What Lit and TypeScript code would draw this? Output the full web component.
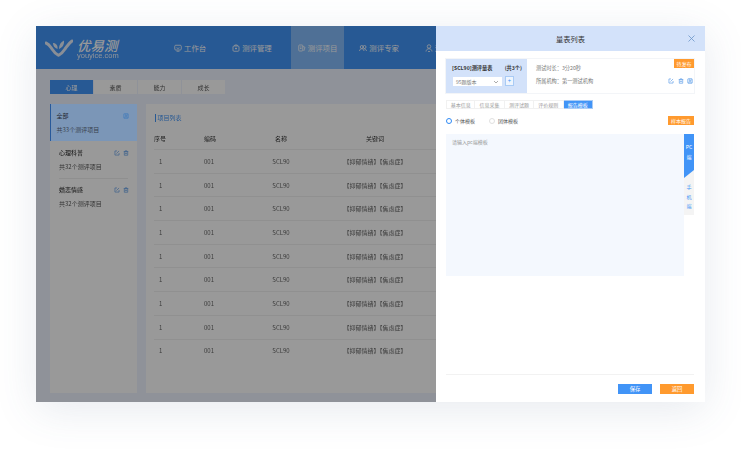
import { LitElement, css, html, svg } from "lit";
import { customElement, state } from "lit/decorators.js";
import { classMap } from "lit/directives/class-map.js";

const icon = (body: unknown, size = 8) => html`<svg
  width=${size}
  height=${size}
  viewBox="0 0 16 16"
  fill="none"
  stroke="currentColor"
  stroke-width="1.6"
>${body}</svg>`;

const icons = {
  desk: svg`<rect x="1.500" y="2.500" width="13" height="9.500" rx="2"/><path d="M5 7.500c1.500 1.600 4.500 1.600 6 0M5 14.500h6"/>`,
  manage: svg`<rect x="2" y="4" width="12" height="10.500" rx="2"/><path d="M5.500 4V2h5v2M8 7v4M6 9h4"/>`,
  project: svg`<rect x="1.500" y="2" width="8" height="12" rx="1.500"/><path d="M9.500 5l4.500 1.500-2.500 7.500M4 6h3M4 9h3"/>`,
  expert: svg`<circle cx="5.500" cy="6" r="3"/><circle cx="11" cy="6" r="3"/><path d="M1 14c.5-3 2-4.500 4.500-4.500S9.500 11 10 14M10 9.500c2.500 0 4.500 1.500 5 4.500"/>`,
  person: svg`<circle cx="8" cy="5" r="3.500"/><path d="M2 15c.5-3.500 2.500-5.500 6-5.500s5.500 2 6 5.500M6 15h4"/>`,
  edit: svg`<path d="M8 2.500H2.500v11h11V8M6.500 9.500l7-7"/>`,
  trash: svg`<path d="M2 4h12M6 4V2h4v2M3.500 4v10h9V4M6.500 7v4M9.500 7v4"/>`,
  publish: svg`<rect x="2" y="2" width="12" height="12" rx="1.500"/><path d="M6 2v5h5V2M5 14v-4h6v4"/>`,
};

const navItems = [
  { label: "工作台", icon: icons.desk },
  { label: "测评管理", icon: icons.manage },
  { label: "测评项目", icon: icons.project, active: true },
  { label: "测评专家", icon: icons.expert },
  { label: "测评用户", icon: icons.person },
];

const categories = ["心理", "素质", "能力", "成长"];

const sideItems = [
  { name: "全部", count: "共33个测评项目", active: true },
  { name: "心理科普", count: "共32个测评项目" },
  { name: "婚恋情感", count: "共32个测评项目" },
];

const drawerTabs = ["基本信息", "信息采集", "测评试题", "评价规则", "报告模板"];

@customElement("app-root")
export class AppRoot extends LitElement {
  static styles = css`
    :host {
      display: block;
      width: 741px;
      height: 449px;
      background: #fff;
      overflow: hidden;
      font-family: "Noto Sans CJK SC", "Noto Sans", sans-serif;
      font-size: 6px;
      color: #555;
    }
    .stage {
      padding: 26px 36px 47px;
      height: 449px;
      box-sizing: border-box;
    }
    .window {
      position: relative;
      height: 376px;
      background: #eef3ff;
      box-shadow: 0 8px 40px rgba(70, 90, 130, 0.13);
      display: flex;
      flex-direction: column;
      overflow: hidden;
      filter: blur(0.35px);
    }

    .header {
      height: 43px;
      flex: none;
      background: #4194f7;
      color: #fff;
      display: flex;
    }
    .logo {
      width: 131px;
      box-sizing: border-box;
      padding-left: 9px;
      flex: none;
      display: flex;
      align-items: center;
      gap: 4px;
    }
    .logo-text {
      display: flex;
      flex-direction: column;
      padding-top: 3px;
    }
    .logo-name {
      font-size: 13.500px;
      line-height: 13px;
      font-weight: 500;
      font-style: italic;
    }
    .logo-url {
      font-family: "Liberation Sans", sans-serif;
      font-size: 7.500px;
      line-height: 8px;
      opacity: 0.9;
    }
    .nav {
      display: flex;
      gap: 12px;
    }
    .nav-item {
      display: flex;
      align-items: center;
      gap: 2px;
      padding: 0 7px;
      font-size: 7.400px;
      white-space: nowrap;
    }
    .nav-item.active {
      background: #84bbfa;
    }
    .nav-item.active + .nav-item {
      margin-left: -4px;
    }

    .content {
      flex: 1;
      min-height: 0;
      padding: 11px 14px 9px;
      display: flex;
      flex-direction: column;
    }
    .cats {
      display: flex;
      gap: 1px;
      height: 14px;
      flex: none;
    }
    .cat {
      width: 43px;
      background: #fff;
      display: flex;
      align-items: center;
      justify-content: center;
    }
    .cat.active {
      background: #4194f7;
      color: #fff;
    }
    .columns {
      flex: 1;
      min-height: 0;
      margin-top: 10px;
      display: flex;
      gap: 9px;
    }
    .side {
      width: 87px;
      flex: none;
      background: #fff;
    }
    .side-item {
      height: 37px;
      padding: 5px 8px 0 9px;
      box-sizing: border-box;
      line-height: 14px;
      color: #555;
    }
    /* sits above the scrim: this blue is brighter than the scrim lets through */
    .side-item.active {
      position: relative;
      z-index: 1;
      background: #7b96b7;
      border-left: 1.500px solid #27599a;
      padding-left: 5.500px;
      color: #39424e;
    }
    .side-item.active .side-row {
      color: #252a31;
    }
    .side-item.active .side-actions {
      color: #3d78bc;
    }
    .side-row {
      display: flex;
      justify-content: space-between;
      align-items: center;
      color: #222;
    }
    .side-actions {
      display: flex;
      gap: 3px;
      color: #4e94e6;
    }
    .side-rule {
      height: 1px;
      margin: 0 9px -1px;
      background: #eee;
    }

    .main {
      flex: 1;
      background: #fff;
      padding: 8px 8px 0;
      min-width: 0;
    }
    .main-title {
      color: #4194f7;
      border-left: 1.500px solid #4194f7;
      padding-left: 1.500px;
      line-height: 8px;
      margin: 2px 0 0 1px;
    }
    .grid {
      margin-top: 5px;
    }
    .row {
      display: grid;
      grid-template-columns: 50px 50px 54px 134px 1fr;
      height: 23.700px;
      align-items: center;
      border-top: 1px solid #f1f1f1;
      box-sizing: border-box;
      color: #666;
    }
    .row.head {
      border-top: none;
      color: #333;
      height: 22px;
    }
    .row span:nth-child(1) {
      padding-left: 5px;
    }
    .row.head span:nth-child(1) {
      padding-left: 0;
    }
    .row span:nth-child(3),
    .row span:nth-child(4) {
      text-align: center;
      white-space: nowrap;
    }
    .scrim {
      position: absolute;
      inset: 0;
      background: rgba(0, 0, 0, 0.4);
    }

    .drawer {
      position: absolute;
      top: 0;
      right: 0;
      bottom: 0;
      width: 269px;
      background: #fff;
      display: flex;
      flex-direction: column;
    }
    .drawer-head {
      height: 25px;
      flex: none;
      background: #d3e2fa;
      display: flex;
      align-items: center;
      justify-content: center;
      position: relative;
      font-size: 7.200px;
      color: #333;
    }
    .close {
      position: absolute;
      right: 10px;
      top: 9px;
      color: #6b95c9;
      display: flex;
    }
    .drawer-body {
      flex: 1;
      min-height: 0;
      padding: 8px 11px 8px 10px;
      display: flex;
      flex-direction: column;
    }
    .scale {
      position: relative;
      height: 34px;
      flex: none;
      display: flex;
      box-shadow: 0 0 0 1px #f3f5f8;
    }
    .scale-left {
      width: 81px;
      box-sizing: border-box;
      background: #d3e2fa;
      padding: 5px 5px 0 6px;
    }
    .scale-title {
      display: flex;
      justify-content: space-between;
      font-size: 5.200px;
      line-height: 8px;
      font-weight: 700;
      color: #333;
    }
    .scale-pick {
      display: flex;
      gap: 3px;
      margin-top: 5px;
      margin-left: 1px;
    }
    .select {
      width: 49px;
      height: 9px;
      background: #fff;
      color: #777;
      font-size: 5px;
      line-height: 9px;
      padding: 0 3px;
      box-sizing: border-box;
      display: flex;
      justify-content: space-between;
      align-items: center;
    }
    .plus {
      width: 9px;
      height: 10px;
      margin-top: -1px;
      box-sizing: border-box;
      background: #eef5fe;
      border: 1px solid #a9cbf5;
      color: #4194f7;
      font-size: 6px;
      line-height: 7px;
      text-align: center;
    }
    .scale-right {
      flex: 1;
      padding: 2px 0 0 9px;
      font-size: 5.200px;
      color: #777;
      line-height: 13px;
    }
    .badge {
      background: #ff9a2e;
      color: #fff;
      font-size: 5px;
      text-align: center;
    }
    .scale .badge {
      position: absolute;
      top: 0;
      right: 0;
      width: 20px;
      height: 9px;
      line-height: 9px;
    }
    .scale-actions {
      position: absolute;
      right: 1px;
      top: 19px;
      display: flex;
      gap: 3.500px;
      color: #4e94e6;
    }
    .tabs {
      display: flex;
      margin-top: 7px;
      height: 9px;
      flex: none;
    }
    .tab {
      width: 29.400px;
      box-sizing: border-box;
      border: 1px solid #f1f1f1;
      border-left: none;
      font-size: 5px;
      line-height: 7px;
      text-align: center;
      color: #999;
    }
    .tab:first-child {
      border-left: 1px solid #f1f1f1;
    }
    .tab.active {
      background: #4194f7;
      border-color: #a9cbf5;
      color: #fff;
    }
    .radios {
      display: flex;
      align-items: center;
      margin-top: 7px;
      height: 9px;
      flex: none;
      font-size: 5px;
      color: #555;
    }
    .radio {
      display: flex;
      align-items: center;
      gap: 3px;
      margin-right: 14px;
    }
    .dot {
      width: 6px;
      height: 6px;
      box-sizing: border-box;
      border-radius: 50%;
      border: 1px solid #e0e0e0;
    }
    .dot.on {
      border: 1.800px solid #2f8af5;
    }
    .radios .badge {
      margin-left: auto;
      width: 26px;
      line-height: 9px;
    }
    .editor {
      display: flex;
      margin-top: 9px;
      height: 142px;
      flex: none;
    }
    .editor-area {
      flex: 1;
      background: #f4f8fe;
      padding: 4px 6px;
      font-size: 5px;
      color: #999;
      line-height: 8px;
    }
    .editor-tabs {
      width: 10px;
      flex: none;
      background: #f4f4f4;
      font-size: 5px;
      text-align: center;
      line-height: 9.500px;
      color: #4194f7;
      height: 81px;
    }
    .editor-tab {
      box-sizing: border-box;
      height: 44px;
      padding-top: 8px;
      background: #4194f7;
      color: #fff;
      clip-path: polygon(0 0, 100% 0, 100% 82%, 0 100%);
    }
    .editor-tab + div {
      padding-top: 4px;
    }
    .foot {
      margin-top: auto;
      padding-top: 9px;
      border-top: 1px solid #f2f2f2;
      display: flex;
      justify-content: flex-end;
      gap: 8px;
    }
    .btn {
      width: 34px;
      height: 10px;
      line-height: 10px;
      text-align: center;
      font-size: 5.300px;
      color: #fff;
      background: #4194f7;
    }
    .btn.back {
      background: #ff9a2e;
    }
  `;

  @state() private _tab = 4;

  private _logo() {
    return html`<svg width="28" height="19" viewBox="0 0 28 19" fill="none" stroke="#e4edfa">
      <path d="M1 5c3 1 4 3 6 6 2 3 4 5 6 6" stroke-width="3" stroke-linecap="round" />
      <path d="M27 3c-3 2-4 4-7 8-2 3-4 5-6 6" stroke-width="3" stroke-linecap="round" />
      <path d="M12.500 11c-3-1-4.500-3-4.500-6 3 0 5 2.500 4.500 6z" fill="#e4edfa" stroke="none" />
      <path d="M14 11c0-4 1.500-7 5-8.500 .5 4-1.500 7-5 8.500z" fill="#e4edfa" stroke="none" />
    </svg>`;
  }

  private _header() {
    return html`<div class="header">
      <div class="logo">
        ${this._logo()}
        <div class="logo-text">
          <span class="logo-name">优易测</span>
          <span class="logo-url">youyice.com</span>
        </div>
      </div>
      <div class="nav">
        ${navItems.map(
          (n) => html`<div class=${classMap({ "nav-item": true, active: !!n.active })}>
            ${icon(n.icon, 8)}<span>${n.label}</span>
          </div>`
        )}
      </div>
    </div>`;
  }

  private _side() {
    return html`<div class="side">
      ${sideItems.map(
        (s, i) => html`<div class=${classMap({ "side-item": true, active: !!s.active })}>
            <div class="side-row">
              <span>${s.name}</span>
              <span class="side-actions">
                ${icon(s.active ? icons.publish : icons.edit, 6)}
                ${s.active ? "" : icon(icons.trash, 6)}
              </span>
            </div>
            <div>${s.count}</div>
          </div>
          ${i === 1 ? html`<div class="side-rule"></div>` : ""}`
      )}
    </div>`;
  }

  private _table() {
    return html`<div class="main">
      <div class="main-title">项目列表</div>
      <div class="grid">
        <div class="row head">
          <span>序号</span><span>编码</span><span>名称</span><span>关键词</span>
        </div>
        ${Array.from({ length: 9 }).map(
          () => html`<div class="row">
            <span>1</span><span>001</span><span>SCL90</span><span>【抑郁情绪】【焦虑症】</span>
          </div>`
        )}
      </div>
    </div>`;
  }

  private _drawer() {
    return html`<div class="drawer">
      <div class="drawer-head">
        量表列表
        <span class="close">
          <svg width="7" height="7" viewBox="0 0 7 7" stroke="currentColor" stroke-width=".8">
            <path d="M.5.5l6 6M6.500.5l-6 6" />
          </svg>
        </span>
      </div>
      <div class="drawer-body">
        <div class="scale">
          <div class="scale-left">
            <div class="scale-title"><span>[SCL90]测评量表</span><span>(共3个)</span></div>
            <div class="scale-pick">
              <div class="select">
                <span>95题版本</span>
                <svg width="6" height="4" viewBox="0 0 6 4" fill="none" stroke="#888" stroke-width=".7">
                  <path d="M1 1l2 2 2-2" />
                </svg>
              </div>
              <div class="plus">+</div>
            </div>
          </div>
          <div class="scale-right">
            <div>测试时长：3分20秒</div>
            <div>所属机构：第一测试机构</div>
          </div>
          <div class="badge">待发布</div>
          <div class="scale-actions">
            ${icon(icons.edit, 6)}${icon(icons.trash, 6)}${icon(icons.publish, 6)}
          </div>
        </div>
        <div class="tabs">
          ${drawerTabs.map(
            (t, i) => html`<div
              class=${classMap({ tab: true, active: i === this._tab })}
              @click=${() => (this._tab = i)}
            >
              ${t}
            </div>`
          )}
        </div>
        <div class="radios">
          <label class="radio"><span class="dot on"></span>个体模板</label>
          <label class="radio"><span class="dot"></span>团体模板</label>
          <div class="badge">样本报告</div>
        </div>
        <div class="editor">
          <div class="editor-area">请输入pc端模板</div>
          <div class="editor-tabs">
            <div class="editor-tab">PC<br />端</div>
            <div>手<br />机<br />端</div>
          </div>
        </div>
        <div class="foot">
          <div class="btn">保存</div>
          <div class="btn back">返回</div>
        </div>
      </div>
    </div>`;
  }

  render() {
    return html`<div class="stage">
      <div class="window">
        ${this._header()}
        <div class="content">
          <div class="cats">
            ${categories.map(
              (c, i) => html`<div class=${classMap({ cat: true, active: i === 0 })}>${c}</div>`
            )}
          </div>
          <div class="columns">${this._side()}${this._table()}</div>
        </div>
        <div class="scrim"></div>
        ${this._drawer()}
      </div>
    </div>`;
  }
}
